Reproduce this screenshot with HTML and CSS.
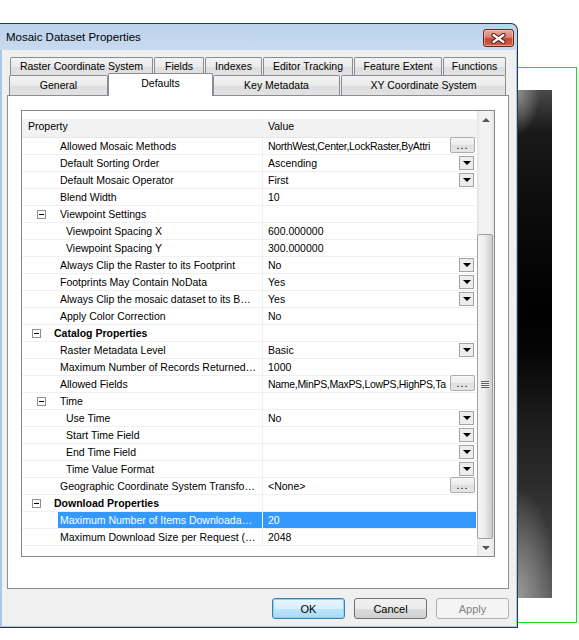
FILE: index.html
```html
<!DOCTYPE html>
<html lang="en">
<head>
  <meta charset="UTF-8">
  <meta name="viewport" content="width=device-width, initial-scale=1.0">
  <title>Mosaic Dataset Properties</title>
  <link rel="stylesheet" href="styles.css">
</head>
<body>
  <div class="window">
    <div class="titlebar">
      <span class="title">Mosaic Dataset Properties</span>
      <button class="close" type="button" aria-label="Close">
        <svg width="15" height="11" viewBox="0 0 15 11">
          <path d="M2.5 2 L12.5 9 M12.5 2 L2.5 9" stroke="#4b1b12" stroke-width="4.2" stroke-linecap="round"/>
          <path d="M2.5 2 L12.5 9 M12.5 2 L2.5 9" stroke="#fff" stroke-width="2.2" stroke-linecap="round"/>
        </svg>
      </button>
    </div>

    <div class="client">
      <div class="tabs">
        <div class="tab-row back">
          <div class="tab t-raster">Raster Coordinate System</div>
          <div class="tab t-fields">Fields</div>
          <div class="tab t-indexes">Indexes</div>
          <div class="tab t-editor">Editor Tracking</div>
          <div class="tab t-extent">Feature Extent</div>
          <div class="tab t-functions">Functions</div>
        </div>
        <div class="tab-row front">
          <div class="tab t-general">General</div>
          <div class="tab t-defaults active">Defaults</div>
          <div class="tab t-keymeta">Key Metadata</div>
          <div class="tab t-xy">XY Coordinate System</div>
        </div>
      </div>

      <div class="panel">
        <div class="grid">
          <div class="grid-body">
            <div class="grid-head">
              <div class="prop">Property</div>
              <div class="val">Value</div>
            </div>

            <div class="row item">
              <div class="prop"><span class="label">Allowed Mosaic Methods</span></div>
              <div class="val"><span class="text list">NorthWest,Center,LockRaster,ByAttri</span><span class="dots">...</span></div>
            </div>
            <div class="row item">
              <div class="prop"><span class="label">Default Sorting Order</span></div>
              <div class="val"><span class="text">Ascending</span><span class="drop"></span></div>
            </div>
            <div class="row item">
              <div class="prop"><span class="label">Default Mosaic Operator</span></div>
              <div class="val"><span class="text">First</span><span class="drop"></span></div>
            </div>
            <div class="row item">
              <div class="prop"><span class="label">Blend Width</span></div>
              <div class="val"><span class="text">10</span></div>
            </div>
            <div class="row group">
              <div class="prop"><span class="exp"></span><span class="label">Viewpoint Settings</span></div>
              <div class="val"></div>
            </div>
            <div class="row sub">
              <div class="prop"><span class="label">Viewpoint Spacing X</span></div>
              <div class="val"><span class="text">600.000000</span></div>
            </div>
            <div class="row sub">
              <div class="prop"><span class="label">Viewpoint Spacing Y</span></div>
              <div class="val"><span class="text">300.000000</span></div>
            </div>
            <div class="row item">
              <div class="prop"><span class="label">Always Clip the Raster to its Footprint</span></div>
              <div class="val"><span class="text">No</span><span class="drop"></span></div>
            </div>
            <div class="row item">
              <div class="prop"><span class="label">Footprints May Contain NoData</span></div>
              <div class="val"><span class="text">Yes</span><span class="drop"></span></div>
            </div>
            <div class="row item">
              <div class="prop"><span class="label">Always Clip the mosaic dataset to its B…</span></div>
              <div class="val"><span class="text">Yes</span><span class="drop"></span></div>
            </div>
            <div class="row item">
              <div class="prop"><span class="label">Apply Color Correction</span></div>
              <div class="val"><span class="text">No</span></div>
            </div>
            <div class="row cat">
              <div class="prop"><span class="exp"></span><span class="label">Catalog Properties</span></div>
              <div class="val"></div>
            </div>
            <div class="row item">
              <div class="prop"><span class="label">Raster Metadata Level</span></div>
              <div class="val"><span class="text">Basic</span><span class="drop"></span></div>
            </div>
            <div class="row item">
              <div class="prop"><span class="label">Maximum Number of Records Returned…</span></div>
              <div class="val"><span class="text">1000</span></div>
            </div>
            <div class="row item">
              <div class="prop"><span class="label">Allowed Fields</span></div>
              <div class="val"><span class="text list">Name,MinPS,MaxPS,LowPS,HighPS,Ta</span><span class="dots">...</span></div>
            </div>
            <div class="row group">
              <div class="prop"><span class="exp"></span><span class="label">Time</span></div>
              <div class="val"></div>
            </div>
            <div class="row sub">
              <div class="prop"><span class="label">Use Time</span></div>
              <div class="val"><span class="text">No</span><span class="drop"></span></div>
            </div>
            <div class="row sub">
              <div class="prop"><span class="label">Start Time Field</span></div>
              <div class="val"><span class="text"></span><span class="drop"></span></div>
            </div>
            <div class="row sub">
              <div class="prop"><span class="label">End Time Field</span></div>
              <div class="val"><span class="text"></span><span class="drop"></span></div>
            </div>
            <div class="row sub">
              <div class="prop"><span class="label">Time Value Format</span></div>
              <div class="val"><span class="text"></span><span class="drop"></span></div>
            </div>
            <div class="row item">
              <div class="prop"><span class="label">Geographic Coordinate System Transfo…</span></div>
              <div class="val"><span class="text">&lt;None&gt;</span><span class="dots">...</span></div>
            </div>
            <div class="row cat">
              <div class="prop"><span class="exp"></span><span class="label">Download Properties</span></div>
              <div class="val"></div>
            </div>
            <div class="row item selected">
              <div class="prop"><span class="label">Maximum Number of Items Downloada…</span></div>
              <div class="val"><span class="text">20</span></div>
            </div>
            <div class="row item">
              <div class="prop"><span class="label">Maximum Download Size per Request (…</span></div>
              <div class="val"><span class="text">2048</span></div>
            </div>
          </div>

          <div class="scrollbar">
            <div class="sb-btn"><span class="arrow up"></span></div>
            <div class="sb-track"></div>
            <div class="sb-thumb"><span class="grip"></span></div>
            <div class="sb-btn"><span class="arrow down"></span></div>
          </div>
        </div>
      </div>

      <div class="buttons">
        <button class="btn default" type="button">OK</button>
        <button class="btn" type="button">Cancel</button>
        <button class="btn" type="button" disabled>Apply</button>
      </div>
    </div>
  </div>

  <div class="backdrop">
    <div class="film"></div>
  </div>
</body>
</html>
```

FILE: styles.css
```css
body {
  margin: 0;
  display: flex;
  align-items: flex-start;
  background: #fff;
  color: #000;
  font-family: "Liberation Sans", Arial, sans-serif;
}

/* window frame */
.window {
  flex: none;
  box-sizing: border-box;
  width: 518px;
  margin-top: 23px;
  border: 1px solid #2c3845;
  border-left: none;
  border-radius: 0 7px 0 0;
  background: linear-gradient(#bcd3ec, #c8daef 26px, #a6c8ea 26px);
}
.titlebar {
  display: flex;
  align-items: flex-start;
  height: 26px;
  padding-left: 6px;
}
.title {
  font-size: 11.5px;
  line-height: 27px;
}
.close {
  display: flex;
  align-items: center;
  justify-content: center;
  box-sizing: border-box;
  width: 31px;
  height: 18px;
  margin: 5px 3px 0 auto;
  padding: 0;
  border: 1px solid #6b2418;
  border-radius: 3px;
  background: linear-gradient(#e9a99b, #d98273 45%, #c4452f 55%, #d0634d);
  box-shadow: inset 0 0 0 1px rgba(255, 220, 210, 0.5);
}

.client {
  margin: 0 1px 1px 2px;
  padding: 7px 7px 7px 5px;
  background: #f0f0f0;
}

/* tabs */
.tabs {
  display: flex;
  flex-direction: column;
  height: 38px;
}
.tab-row {
  display: flex;
}
.tab-row.back {
  height: 18px;
  gap: 1px;
  padding-left: 3px;
}
.tab-row.front {
  height: 20px;
  padding-left: 2px;
}
.tab {
  box-sizing: border-box;
  border: 1px solid #898c95;
  border-bottom: none;
  border-radius: 2px 2px 0 0;
  background: linear-gradient(#f3f3f3, #ebebeb 50%, #dedede 52%, #e2e2e2);
  font-size: 10.5px;
  text-align: center;
  white-space: nowrap;
}
.back .tab {
  height: 18px;
  line-height: 17px;
}
.front .tab {
  height: 20px;
  line-height: 19px;
}
.tab.active {
  position: relative;
  z-index: 1;
  height: 23px;
  margin: -2px 0 -1px;
  background: #fff;
  line-height: 18px;
}
.t-raster { width: 143px; }
.t-fields { width: 50px; }
.t-indexes { width: 57px; }
.t-editor { width: 90px; }
.t-extent { width: 88px; }
.t-functions { width: 63px; }
.t-general { width: 99px; }
.t-defaults { width: 105px; }
.t-keymeta { width: 127px; }
.t-xy { width: 165px; margin-left: 1px; }

.panel {
  box-sizing: border-box;
  height: 494px;
  padding: 14px 0 0 13px;
  border: 1px solid #898c95;
  background: #fff;
}

/* property grid */
.grid {
  display: flex;
  box-sizing: border-box;
  width: 474px;
  height: 447px;
  border: 1px solid #828790;
}
.grid-body {
  flex: 1;
  min-width: 0;
  font-size: 10.5px;
}
.grid-head {
  display: flex;
  height: 18px;
  margin-top: 8px;
  border-bottom: 1px solid #e6e6e6;
  background: #f2f2f2;
}
.grid-head .prop,
.grid-head .val {
  line-height: 14px;
  align-items: flex-start;
}
.grid-head .prop {
  padding-left: 6px;
}
.row {
  display: flex;
  height: 16px;
  line-height: 16px;
  border-bottom: 1px solid #f0f0f0;
}
.prop {
  display: flex;
  align-items: center;
  flex: none;
  box-sizing: border-box;
  width: 241px;
  border-right: 1px solid #f0f0f0;
  white-space: nowrap;
  overflow: hidden;
}
.val {
  display: flex;
  align-items: center;
  flex: 1;
  min-width: 0;
  padding-left: 5px;
}
.val .text {
  flex: 1;
  min-width: 0;
  white-space: nowrap;
}
.val .list {
  letter-spacing: -0.3px;
}
.item .prop { padding-left: 38px; }
.sub .prop { padding-left: 44px; }
.group .prop { padding-left: 15px; }
.cat .prop {
  padding-left: 10px;
  font-weight: bold;
}
.exp {
  position: relative;
  flex: none;
  box-sizing: border-box;
  width: 9px;
  height: 9px;
  margin-right: 14px;
  border: 1px solid #8e8f8f;
  background: #fff;
}
.cat .exp { margin-right: 13px; }
.exp::after {
  content: "";
  position: absolute;
  left: 1px;
  top: 3px;
  width: 5px;
  height: 1px;
  background: #000;
}
.selected .label {
  flex: 1;
  align-self: stretch;
  margin-left: -2px;
  padding-left: 2px;
  background: #3399ff;
  color: #fff;
}
.selected .val {
  margin-right: 1px;
  background: #3399ff;
  color: #fff;
}

.drop {
  display: flex;
  align-items: center;
  justify-content: center;
  flex: none;
  box-sizing: border-box;
  width: 15px;
  height: 14px;
  margin-right: 3px;
  border: 1px solid #a3a3a3;
  background: #ededed;
}
.drop::after {
  content: "";
  border-left: 4px solid transparent;
  border-right: 4px solid transparent;
  border-top: 4px solid #000;
}
.dots {
  align-self: flex-start;
  flex: none;
  box-sizing: border-box;
  width: 25px;
  height: 16px;
  margin: -1px 2px 0 0;
  border: 1px solid #acacac;
  border-radius: 2px;
  background: linear-gradient(#f6f6f6, #ececec 50%, #dfdfdf 52%, #e6e6e6);
  font-size: 11px;
  line-height: 14px;
  text-align: center;
  letter-spacing: 1px;
}

/* scrollbar */
.scrollbar {
  display: flex;
  flex-direction: column;
  flex: none;
  width: 17px;
  background: linear-gradient(to right, #e3e3e3, #f2f2f2 3px, #f2f2f2 13px, #e6e6e6);
}
.sb-btn {
  display: flex;
  align-items: center;
  justify-content: center;
  height: 17px;
}
.sb-track {
  height: 106px;
}
.sb-thumb {
  display: flex;
  align-items: center;
  justify-content: center;
  box-sizing: border-box;
  height: 305px;
  margin-right: 1px;
  border: 1px solid #a0a0a0;
  border-radius: 2px;
  background: linear-gradient(to right, #f6f6f6, #ececec 50%, #dadada 75%, #cfcfcf);
}
.grip {
  width: 8px;
  height: 7px;
  margin-top: -4px;
  background: repeating-linear-gradient(#5f5f5f 0 1px, #f4f4f4 1px 2px);
}
.arrow {
  border-left: 4px solid transparent;
  border-right: 4px solid transparent;
}
.arrow.up { border-bottom: 4px solid #555; }
.arrow.down { border-top: 4px solid #555; }

/* dialog buttons */
.buttons {
  display: flex;
  justify-content: flex-end;
  gap: 9px;
  margin-top: 9px;
}
.btn {
  box-sizing: border-box;
  width: 73px;
  height: 21px;
  padding: 0;
  border: 1px solid #707070;
  border-radius: 3px;
  background: linear-gradient(#f2f2f2, #ebebeb 50%, #dddddd 52%, #cfcfcf);
  font-family: "Liberation Sans", Arial, sans-serif;
  font-size: 11px;
  color: #000;
}
.btn.default {
  border-color: #3c7fb1;
  background: linear-gradient(#e9f6fd, #d8effc 50%, #bde5fb 52%, #a9daf6);
  box-shadow: inset 0 0 0 1px #8fd3f5;
}
.btn:disabled {
  border-color: #adb2b5;
  background: #f4f4f4;
  color: #838383;
}

/* what shows behind the dialog */
.backdrop {
  flex: none;
  box-sizing: border-box;
  width: 59px;
  height: 556px;
  margin-top: 67px;
  border: 1px solid #1be01b;
  border-left: none;
}
.film {
  width: 34px;
  height: 508px;
  margin-top: 22px;
  background:
    radial-gradient(ellipse 22px 45px at 0 0, rgba(150, 150, 150, 0.9), rgba(150, 150, 150, 0)),
    radial-gradient(ellipse 40px 110px at 0 100%, rgba(165, 165, 165, 0.85), rgba(165, 165, 165, 0)),
    linear-gradient(#4a4a4a, #1a1a1a 40px, #0c0c0c 120px, #000 220px, #050505 260px, #1c1c1c 330px, #2e2e2e 400px, #444 470px, #555);
}
```
